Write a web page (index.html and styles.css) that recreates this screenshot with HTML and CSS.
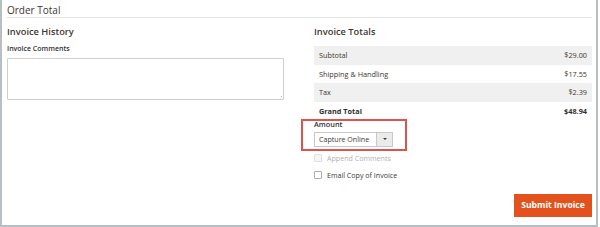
FILE: index.html
```html
<!DOCTYPE html>
<html>
<head>
<meta charset="utf-8">
<link rel="stylesheet" href="styles.css">
</head>
<body>
<div class="frame">
  <div class="section-title">Order Total</div>
  <div class="columns">
    <div class="col">
      <div class="col-title">Invoice History</div>
      <div class="field-label">Invoice Comments</div>
      <textarea class="comments"></textarea>
    </div>
    <div class="col">
      <div class="col-title">Invoice Totals</div>
      <div class="totals">
        <div class="row alt"><span>Subtotal</span><span>$29.00</span></div>
        <div class="row"><span>Shipping &amp; Handling</span><span>$17.55</span></div>
        <div class="row alt"><span>Tax</span><span>$2.39</span></div>
        <div class="row grand"><span>Grand Total</span><span>$48.94</span></div>
      </div>
      <div class="highlight">
        <div class="amount-label">Amount</div>
        <div class="select">
          <span class="select-text">Capture Online</span>
          <span class="select-btn"><span class="caret"></span></span>
        </div>
      </div>
      <div class="check disabled"><span class="box"></span><span>Append Comments</span></div>
      <div class="check email"><span class="box"></span><span>Email Copy of Invoice</span></div>
      <div class="actions"><button class="submit">Submit Invoice</button></div>
    </div>
  </div>
</div>
</body>
</html>
```
FILE: styles.css
```css
* { box-sizing: border-box; }
html, body { margin: 0; padding: 0; background: #fff; }
body { font-family: "Open Sans", "Liberation Sans", sans-serif; color: #303030; }

.frame {
  width: 598px;
  height: 227px;
  border-left: 2px solid #b8bec2;
  border-right: 2px solid #b8bec2;
  border-bottom: 2px solid #b8bec2;
  padding: 0 4px 0 5px;
}

.section-title {
  font-size: 10px;
  line-height: 14px;
  padding-top: 3px;
  color: #41362f;
  border-bottom: 1px solid #e3e3e3;
}

.columns {
  display: grid;
  grid-template-columns: 277px 278px;
  column-gap: 30px;
}

.col-title {
  margin-top: 8px;
  font-size: 9.3px;
  line-height: 12px;
  font-weight: 600;
  color: #41362f;
}

.field-label {
  margin-top: 6px;
  font-size: 7px;
  line-height: 10px;
  font-weight: 600;
}

.comments {
  display: block;
  margin: 4px 0 0;
  width: 277px;
  height: 42px;
  border: 1px solid #cfcfcf;
  border-radius: 1px;
  resize: none;
  background:
    linear-gradient(135deg, transparent 0 62%, #b5b5b5 62% 68%, transparent 68% 80%, #b5b5b5 80% 86%, transparent 86%) right 1px bottom 1px / 5px 5px no-repeat,
    #fff;
}

.totals { margin-top: 8px; }
.row {
  display: flex;
  justify-content: space-between;
  height: 18.5px;
  align-items: center;
  padding: 0 5px;
  font-size: 7.3px;
  color: #41362f;
}
.row.alt { background: #f0f0f0; }
.row.grand { font-weight: 700; color: #303030; height: 18px; }

.highlight {
  margin: -1px 0 0 -13px;
  width: 106px;
  border: 2px solid #e0524e;
  padding: 0 12px 2px 11px;
}
.amount-label {
  font-size: 7.3px;
  line-height: 7px;
  font-weight: 600;
}
.select {
  margin-top: 4px;
  height: 15px;
  display: flex;
  border: 1px solid #c8c8c8;
  font-size: 7.1px;
  color: #41362f;
}
.select-text {
  flex: 1;
  padding-left: 4px;
  line-height: 13px;
}
.select-btn {
  width: 16px;
  border-left: 1px solid #c8c8c8;
  background: #ebebeb;
  display: flex;
  align-items: center;
  justify-content: center;
}
.caret {
  width: 0; height: 0;
  border-left: 2px solid transparent;
  border-right: 2px solid transparent;
  border-top: 2.5px solid #41362f;
}

.check {
  display: flex;
  align-items: center;
  gap: 5px;
  height: 8px;
  font-size: 7.1px;
  color: #41362f;
}
.check .box {
  width: 8px; height: 8px;
  border: 1px solid #adadad;
  border-radius: 1px;
  background: #fff;
}
.check.disabled { margin-top: 3px; color: #b0b0b0; }
.check.disabled .box { border-color: #dedede; background: #f6f6f6; }
.check.email { margin-top: 9px; }

.actions {
  display: flex;
  justify-content: flex-end;
  margin-top: 15px;
}
.submit {
  width: 78px;
  height: 23px;
  border: 0;
  background: #e3521d;
  color: #fff;
  font-family: "Open Sans", "Liberation Sans", sans-serif;
  font-size: 8.6px;
  font-weight: 700;
  padding: 0;
}
```
